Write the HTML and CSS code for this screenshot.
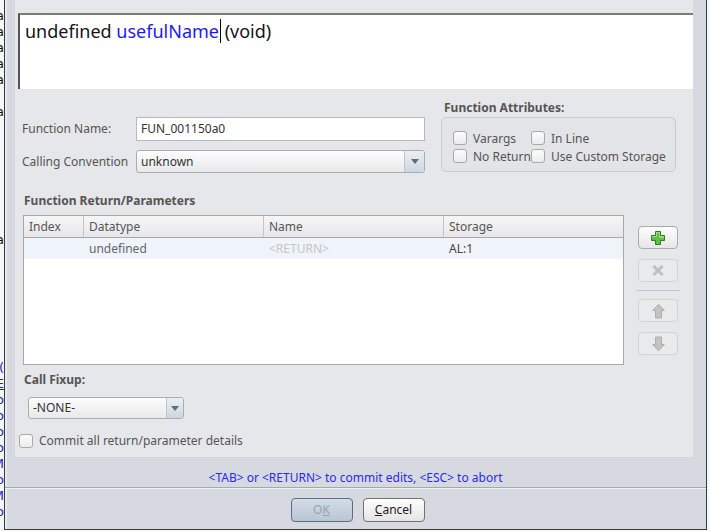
FILE: index.html
```html
<!DOCTYPE html>
<html>
<head>
<meta charset="utf-8">
<link rel="stylesheet" href="styles.css">
</head>
<body>
<div class="desk-left">
  <div class="bg-lines">
    <div>a</div><div>a</div><div>a</div><div>a</div><div>a</div><div>&nbsp;</div><div>a</div>
    <div>&nbsp;</div><div>&nbsp;</div><div>&nbsp;</div><div>&nbsp;</div><div>&nbsp;</div><div>&nbsp;</div><div>&nbsp;</div>
    <div>a</div>
    <div>&nbsp;</div><div>&nbsp;</div><div>&nbsp;</div><div>&nbsp;</div><div>&nbsp;</div><div>&nbsp;</div><div>&nbsp;</div>
    <div class="blue">0(</div><div class="blue u">E</div><div class="blue">o</div><div class="blue">o</div><div class="blue">o</div><div class="blue">o</div><div class="blue">M</div><div class="blue">o</div><div class="blue">M</div><div class="blue">o</div>
  </div>
</div>
<div class="window">
  <div class="main">
    <div class="content">
      <div class="sig">undefined <span class="fname">usefulName</span><span class="caret"></span> (void)</div>
      <div class="panel">
        <div class="top-row">
          <div class="fields">
            <div class="field-row">
              <div class="field-label">Function Name:</div>
              <div class="text-input">FUN_001150a0</div>
            </div>
            <div class="field-row">
              <div class="field-label">Calling Convention</div>
              <div class="combo wide">
                <div class="combo-text">unknown</div>
                <div class="combo-btn"><span class="tri"></span></div>
              </div>
            </div>
          </div>
          <div class="attrs">
            <div class="group-title">Function Attributes:</div>
            <div class="attr-box">
              <div class="check"><span class="box"></span><span>Varargs</span></div>
              <div class="check"><span class="box"></span><span>In Line</span></div>
              <div class="check"><span class="box"></span><span>No Return</span></div>
              <div class="check"><span class="box"></span><span>Use Custom Storage</span></div>
            </div>
          </div>
        </div>

        <div class="section-title">Function Return/Parameters</div>
        <div class="table-row">
          <div class="table">
            <div class="thead">
              <div class="th">Index</div>
              <div class="th">Datatype</div>
              <div class="th">Name</div>
              <div class="th last">Storage</div>
            </div>
            <div class="tr">
              <div class="td"></div>
              <div class="td dt">undefined</div>
              <div class="td ph">&lt;RETURN&gt;</div>
              <div class="td st">AL:1</div>
            </div>
          </div>
          <div class="side">
            <div class="tbtn">
              <svg width="16" height="16" viewBox="0 0 16 16"><path d="M5.5 1.5h5v4h4v5h-4v4h-5v-4h-4v-5h4z" fill="#64bd48" stroke="#2f7a22" stroke-width="1"/><path d="M6.5 2.5h3v4h4v1h-4M6.5 2.5v4h-4v1" fill="none" stroke="#9ee07e" stroke-width="1"/></svg>
            </div>
            <div class="tbtn dis gap10">
              <svg width="12" height="11" viewBox="0 0 12 11"><path d="M2.5 2l7 7M9.5 2l-7 7" stroke="#c0c0c0" stroke-width="3" stroke-linecap="square"/></svg>
            </div>
            <div class="side-sep"></div>
            <div class="tbtn dis gap8">
              <svg width="13" height="16" viewBox="0 0 13 16"><path d="M6.5 1.2L12.3 7.5H9.5V15H3.5V7.5H0.7Z" fill="#c3c3c3" stroke="#adadad" stroke-width="1"/></svg>
            </div>
            <div class="tbtn dis gap10">
              <svg width="13" height="16" viewBox="0 0 13 16"><path d="M6.5 14.8L12.3 8.5H9.5V1H3.5V8.5H0.7Z" fill="#c3c3c3" stroke="#adadad" stroke-width="1"/></svg>
            </div>
          </div>
        </div>

        <div class="section-title fix">Call Fixup:</div>
        <div class="combo small">
          <div class="combo-text">-NONE-</div>
          <div class="combo-btn"><span class="tri"></span></div>
        </div>
        <div class="check commit"><span class="box"></span><span>Commit all return/parameter details</span></div>
      </div>
    </div>
  </div>
  <div class="status">&lt;TAB&gt; or &lt;RETURN&gt; to commit edits, &lt;ESC&gt; to abort</div>
  <div class="buttonbar">
    <div class="btn ok">O<u>K</u></div>
    <div class="btn cancel"><u>C</u>ancel</div>
  </div>
</div>
<div class="desk-right"></div>
</body>
</html>
```

FILE: styles.css
```css
* { box-sizing: border-box; }
html, body { margin: 0; padding: 0; }
body {
  width: 710px;
  height: 531px;
  overflow: hidden;
  background: #f5f8fb;
  display: flex;
  align-items: flex-start;
  font-family: "Noto Sans", sans-serif;
}
.desk-left { width: 4px; height: 531px; overflow: hidden; flex: none; }
.bg-lines {
  width: 44px;
  margin-left: -40px;
  text-align: right;
  font: 13px/16px "DejaVu Sans", sans-serif;
  color: #111;
  padding-top: 8px;
}
.bg-lines .blue { color: #2020d0; }
.bg-lines .u { text-decoration: underline; }
.desk-right { width: 3px; flex: none; }

.window {
  width: 703px;
  height: 530px;
  flex: none;
  border-left: 1px solid #3a3a3a;
  border-right: 1px solid #3a3a3a;
  border-bottom: 1px solid #3a3a3a;
  background: #d6d9df;
  box-shadow: inset 2px 0 0 #e6e9ee;
  display: flex;
  flex-direction: column;
}
.main {
  display: flex;
  height: 457px;
  padding-left: 10px;
  padding-right: 13px;
  flex: none;
}
.content {
  width: 678px;
  background: #e6e7ea;
  display: flex;
  flex-direction: column;
}
.sig {
  margin: 13px 0 0 3px;
  height: 76px;
  background: #fff;
  border-top: 2px solid #7a7a7a;
  border-left: 2px solid #555;
  padding: 4px 0 0 5px;
  font-size: 18px;
  line-height: 24px;
  color: #151515;
  white-space: nowrap;
}
.fname { color: #1a1aff; }
.caret {
  display: inline-block;
  width: 1px;
  height: 24px;
  background: #000;
  vertical-align: top;
  margin-left: 1px;
  margin-right: -1px;
}

.panel {
  flex: 1;
  padding: 11px 0 8px 7px;
  font-size: 12px;
  color: #555;
}
.top-row { display: flex; }
.fields {
  width: 403px;
  padding-top: 17px;
  display: flex;
  flex-direction: column;
  gap: 9px;
}
.field-row { display: flex; align-items: center; }
.field-label { width: 114px; line-height: 16px; }
.text-input {
  width: 289px;
  height: 24px;
  background: #fff;
  border: 1px solid #b8b8b8;
  padding-left: 4px;
  line-height: 22px;
  color: #333;
}
.combo {
  height: 23px;
  border: 1px solid #a9adb3;
  border-radius: 3px;
  background: linear-gradient(#fcfcfc, #e9e9eb);
  display: flex;
}
.combo.wide { width: 289px; }
.combo-text { flex: 1; padding-left: 4px; line-height: 21px; color: #333; }
.combo-btn {
  width: 20px;
  border-left: 1px solid #bcc5cf;
  background: linear-gradient(#eaeff4, #cdd7e1);
  border-radius: 0 2px 2px 0;
  display: flex;
  align-items: center;
  justify-content: center;
}
.tri {
  width: 0;
  height: 0;
  border-left: 4px solid transparent;
  border-right: 4px solid transparent;
  border-top: 5px solid #6a6a6a;
}
.attrs { margin-left: 16px; width: 235px; }
.group-title {
  font-weight: bold;
  line-height: 16px;
  color: #555;
  margin-left: 3px;
  margin-bottom: 1px;
}
.attr-box {
  height: 55px;
  border: 1px solid #c9cbcf;
  border-radius: 5px;
  background: #e3e4e7;
  padding: 11px 0 0 11px;
  display: grid;
  grid-template-columns: 78px auto;
  grid-auto-rows: 18px;
}
.check { display: flex; align-items: center; gap: 6px; white-space: nowrap; }
.box {
  width: 14px;
  height: 14px;
  border: 1px solid #a9a9a9;
  border-radius: 3px;
  background: linear-gradient(#fbfbfb, #ececec);
  flex: none;
}

.section-title {
  font-weight: bold;
  line-height: 16px;
  margin: 20px 0 6px 2px;
  color: #555;
}
.section-title.fix { margin: 7px 0 9px 2px; }

.table-row { display: flex; margin-left: 1px; }
.table {
  width: 601px;
  height: 150px;
  border: 1px solid #a9a9a9;
  background: #fff;
}
.thead {
  display: grid;
  grid-template-columns: 60px 180px 180px auto;
  height: 22px;
  background: linear-gradient(#f6f6f7, #e7e7e9);
  border-bottom: 1px solid #a9a9a9;
}
.th {
  padding-left: 5px;
  line-height: 21px;
  border-right: 1px solid #c4c4c4;
  color: #555;
}
.th.last { border-right: none; }
.tr {
  display: grid;
  grid-template-columns: 60px 180px 180px auto;
  height: 21px;
  background: #eef4fa;
}
.td { padding-left: 5px; padding-top: 1px; line-height: 20px; }
.td.dt { color: #666; }
.td.ph { color: #c6c6c6; }
.td.st { color: #444; }

.side {
  margin-left: 14px;
  padding-top: 11px;
  width: 40px;
  display: flex;
  flex-direction: column;
}
.tbtn {
  width: 40px;
  height: 23px;
  border: 1px solid #a7aaaf;
  border-radius: 4px;
  background: linear-gradient(#fdfdfd, #e6e6e8);
  display: flex;
  align-items: center;
  justify-content: center;
  flex: none;
}
.tbtn.dis { border-color: #d1d3d7; background: #e9eaec; }
.gap10 { margin-top: 10px; }
.gap8 { margin-top: 8px; }
.side-sep {
  height: 1px;
  width: 44px;
  margin: 8px 0 0 -2px;
  background: #c3c5c9;
}

.combo.small { width: 156px; height: 22px; margin-left: 6px; }
.combo.small .combo-text { line-height: 20px; }
.combo.small .combo-btn { width: 17px; }
.check.commit { margin: 13px 0 0 -3px; height: 17px; color: #555; }

.status {
  height: 30px;
  padding-top: 13px;
  line-height: 16px;
  font-size: 12px;
  text-align: center;
  color: #2a2af2;
  flex: none;
}
.buttonbar {
  flex: 1;
  border-top: 1px solid #a3a8b0;
  box-shadow: inset 0 1px 0 #eef0f3;
  padding: 10px 0 0 4px;
  display: flex;
  justify-content: center;
  gap: 10px;
}
.btn {
  width: 62px;
  height: 24px;
  border-radius: 4px;
  font-size: 12px;
  line-height: 22px;
  text-align: center;
}
.btn.ok {
  border: 1px solid #5f6e82;
  background: linear-gradient(#d3dce6, #b8c6d4);
  color: #9aa3ad;
}
.btn.cancel {
  border: 1px solid #727272;
  background: linear-gradient(#fdfdfd, #e5e5e6);
  color: #222;
}
```
